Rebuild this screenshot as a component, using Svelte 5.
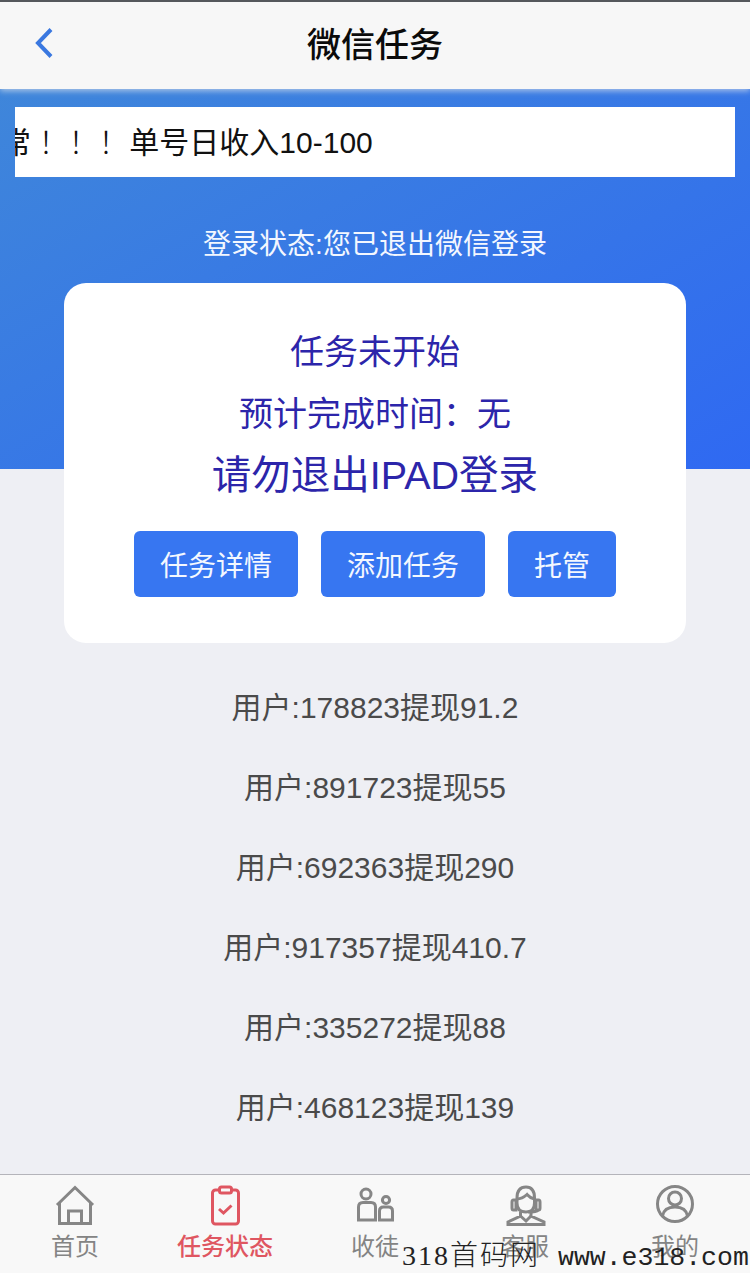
<script>
  const actions = [
    { label: '任务详情' },
    { label: '添加任务' },
    { label: '托管' }
  ];

  const withdrawals = [
    { user: '178823', amount: '91.2' },
    { user: '891723', amount: '55' },
    { user: '692363', amount: '290' },
    { user: '917357', amount: '410.7' },
    { user: '335272', amount: '88' },
    { user: '468123', amount: '139' }
  ];

  const tabs = [
    { key: 'home', label: '首页' },
    { key: 'task', label: '任务状态', active: true },
    { key: 'team', label: '收徒' },
    { key: 'help', label: '客服' },
    { key: 'me', label: '我的' }
  ];
</script>

<div class="page">
  <header class="nav">
    <svg class="back" viewBox="0 0 20 32" width="20" height="32" aria-hidden="true">
      <path d="M17 2.5 L4 16 L17 29.5" />
    </svg>
    <h1>微信任务</h1>
  </header>

  <main class="content">
    <div class="notice"><span>常<i>！！！</i> 单号日收入10-100</span></div>
    <p class="status">登录状态:您已退出微信登录</p>

    <section class="card">
      <p class="line">任务未开始</p>
      <p class="line">预计完成时间：无</p>
      <p class="warn">请勿退出IPAD登录</p>
      <div class="actions">
        {#each actions as a}
          <button>{a.label}</button>
        {/each}
      </div>
    </section>

    <ul class="list">
      {#each withdrawals as w}
        <li>用户:{w.user}提现{w.amount}</li>
      {/each}
    </ul>
  </main>

  <nav class="tabs">
    {#each tabs as t}
      <div class="tab" class:active={t.active}>
        <svg viewBox="0 0 42 42" width="42" height="42" aria-hidden="true">
          {#if t.key === 'home'}
            <path d="M3 21 L21 3.5 L39 21" />
            <path d="M5.5 18.5 V39.5 H36.5 V18.5" />
            <path d="M14.5 39.5 V27 H27.5 V39.5" />
          {:else if t.key === 'task'}
            <rect x="8.5" y="6" width="26" height="34" rx="3" />
            <rect x="15.5" y="3" width="12" height="6" rx="2" fill="#f8f8f8" />
            <path d="M15 25 L19.5 29 L27.5 21.5" />
          {:else if t.key === 'team'}
            <circle cx="12" cy="10" r="5" />
            <path d="M4.5 36 V23 Q4.5 18.5 9 18.5 H17 Q21.5 18.5 21.5 23 V36 Z" />
            <circle cx="32" cy="16" r="3.6" />
            <path d="M25.5 36 V27 Q25.5 23 29.5 23 H34.5 Q38.5 23 38.5 27 V36 Z" />
          {:else if t.key === 'help'}
            <path d="M13 14 Q13 3 22 3 Q30.5 3 30.5 14 V19 Q30.5 28 22 28 Q13 28 13 19 Z" />
            <path d="M13 15 Q18 15 23 10.5 Q26 14 30.5 15" />
            <path d="M12 16 H9.5 Q8 16 8 18 V24 Q8 26 9.5 26 H12 Z" />
            <path d="M32 16 H34.5 Q36 16 36 18 V24 Q36 26 34.5 26 H32 Z" />
            <path d="M34 26 Q32.5 28 24 28" />
            <path d="M16.5 28 V32 L4 38 V40.5 H40 V38 L27 32 V28" />
            <path d="M16.5 32 L22 37 L27 32" />
          {:else}
            <circle cx="21" cy="20" r="17.5" />
            <circle cx="21" cy="14.5" r="6.5" />
            <path d="M8.5 32 Q10 23 21 23 Q32 23 33.5 32" />
          {/if}
        </svg>
        <span>{t.label}</span>
      </div>
    {/each}
  </nav>

  <div class="watermark"><span class="cn">318首码网</span><span class="url">www.e318.com</span></div>
</div>

<style>
  :global(body) {
    margin: 0;
    background: #eeeff4;
  }

  .page {
    position: relative;
    width: 750px;
    height: 1273px;
    overflow: hidden;
    display: flex;
    flex-direction: column;
    background: #eeeff4;
    font-family: "Liberation Sans", "Noto Sans CJK SC", sans-serif;
  }

  .nav {
    position: relative;
    z-index: 1;
    flex: none;
    height: 89px;
    box-sizing: border-box;
    border-top: 2px solid #55585c;
    background: #f7f7f7;
    display: flex;
    align-items: center;
    justify-content: center;
    box-shadow: 0 2px 6px rgba(210, 220, 235, 0.75);
  }

  .back {
    position: absolute;
    left: 34px;
    top: 25px;
  }

  .back path {
    fill: none;
    stroke: #3a78e0;
    stroke-width: 4;
  }

  h1 {
    margin: 0;
    font-size: 34px;
    font-weight: 500;
    color: #0b0b0b;
    line-height: 1;
    position: relative;
    top: -1px;
  }

  .content {
    flex: 1;
    min-height: 0;
    display: flex;
    flex-direction: column;
    align-items: center;
    padding-top: 18px;
    background: linear-gradient(150deg, #3f86da 0%, #2f69f2 100%) top / 100% 380px no-repeat;
  }

  .notice {
    width: 720px;
    height: 70px;
    background: #fff;
    overflow: hidden;
    display: flex;
    align-items: center;
    white-space: nowrap;
  }

  .notice span {
    position: relative;
    top: -2px;
    margin-left: -14px;
    font-size: 30px;
    color: #111;
  }

  .notice i {
    font-style: normal;
    font-family: "Noto Sans CJK TC", sans-serif;
    font-weight: 300;
  }

  .status {
    margin: 51px 0 0;
    font-size: 28px;
    line-height: 34px;
    color: #f3f7ff;
  }

  .card {
    margin-top: 21px;
    width: 622px;
    height: 360px;
    box-sizing: border-box;
    padding-top: 49px;
    border-radius: 22px;
    background: #fff;
    display: flex;
    flex-direction: column;
    align-items: center;
    color: #2c25aa;
  }

  .line {
    margin: 0 0 22px;
    font-size: 34px;
    line-height: 40px;
  }

  .warn {
    margin: -4px 0 0;
    font-size: 39.5px;
    line-height: 46px;
  }

  .actions {
    margin-top: 33px;
    display: flex;
    gap: 23px;
  }

  button {
    height: 66px;
    padding: 0 26px;
    border: 0;
    border-radius: 6px;
    background: #3776f1;
    color: #f4f8ff;
    font: inherit;
    font-size: 28px;
  }

  .list {
    margin: 32px 0 0;
    padding: 0;
    list-style: none;
    text-align: center;
  }

  li {
    height: 80px;
    line-height: 66px;
    font-size: 30px;
    color: #4a4a4a;
  }

  .tabs {
    flex: none;
    height: 99px;
    box-sizing: border-box;
    border-top: 1px solid #b4b4ba;
    background: #f8f8f8;
    display: grid;
    grid-template-columns: repeat(5, 1fr);
  }

  .tab {
    display: flex;
    flex-direction: column;
    align-items: center;
    padding-top: 9px;
    color: #848484;
    font-size: 24px;
    line-height: 30px;
  }

  .tab svg {
    display: block;
    margin-bottom: 6px;
    fill: none;
    stroke: #868686;
    stroke-width: 3;
  }

  .tab.active {
    color: #df5661;
    font-weight: 500;
  }

  .tab.active svg {
    stroke: #df5661;
  }

  .watermark {
    position: absolute;
    left: 402px;
    bottom: 0;
    display: flex;
    align-items: baseline;
    color: #222;
    white-space: nowrap;
  }

  .cn {
    font-family: "Liberation Serif", "Noto Sans CJK SC", serif;
    font-size: 28px;
    font-weight: 300;
    letter-spacing: 2px;
    width: 156px;
  }

  .url {
    font-family: "Liberation Mono", monospace;
    font-size: 26.5px;
  }
</style>
